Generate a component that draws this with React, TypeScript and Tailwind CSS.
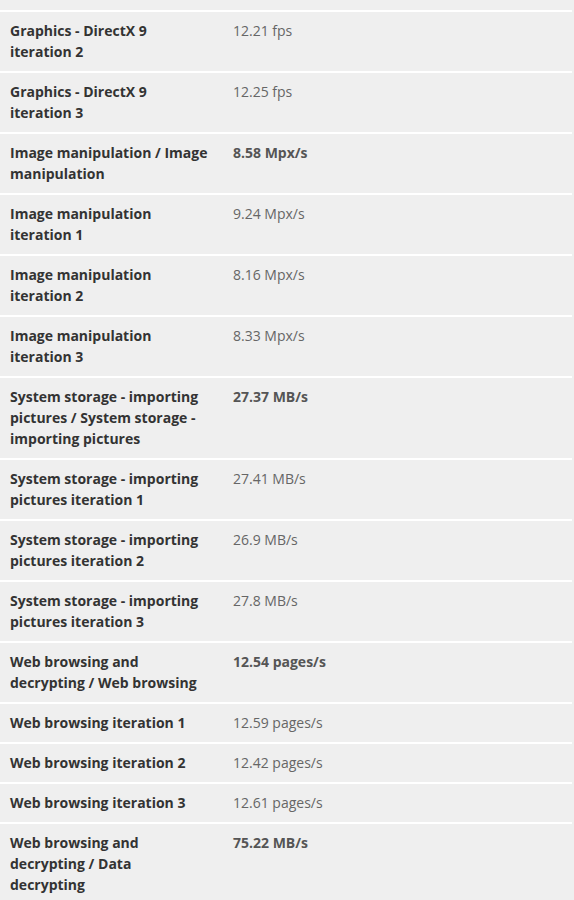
const rows: { label: string; value: string; strong?: boolean }[] = [
  { label: 'Graphics - DirectX 9 iteration 2', value: '12.21 fps' },
  { label: 'Graphics - DirectX 9 iteration 3', value: '12.25 fps' },
  { label: 'Image manipulation / Image manipulation', value: '8.58 Mpx/s', strong: true },
  { label: 'Image manipulation iteration 1', value: '9.24 Mpx/s' },
  { label: 'Image manipulation iteration 2', value: '8.16 Mpx/s' },
  { label: 'Image manipulation iteration 3', value: '8.33 Mpx/s' },
  {
    label: 'System storage - importing pictures / System storage - importing pictures',
    value: '27.37 MB/s',
    strong: true,
  },
  { label: 'System storage - importing pictures iteration 1', value: '27.41 MB/s' },
  { label: 'System storage - importing pictures iteration 2', value: '26.9 MB/s' },
  { label: 'System storage - importing pictures iteration 3', value: '27.8 MB/s' },
  { label: 'Web browsing and decrypting / Web browsing', value: '12.54 pages/s', strong: true },
  { label: 'Web browsing iteration 1', value: '12.59 pages/s' },
  { label: 'Web browsing iteration 2', value: '12.42 pages/s' },
  { label: 'Web browsing iteration 3', value: '12.61 pages/s' },
  { label: 'Web browsing and decrypting / Data decrypting', value: '75.22 MB/s', strong: true },
];

export default function App() {
  return (
    <div className="h-[900px] overflow-hidden bg-[#efefef] font-['Open_Sans',sans-serif] text-[14px] leading-[21px]">
      <div className="w-[572px]">
        <div className="h-[10px]" />
        {rows.map((row, i) => (
          <div key={i} className="flex border-t-2 border-white">
            <div className="w-[233px] shrink-0 pl-[10px] pr-[24px] pt-[8px] pb-[9px] font-bold text-[#333]">
              {row.label}
            </div>
            <div
              className={
                row.strong
                  ? 'pt-[8px] pb-[9px] font-bold text-[#555]'
                  : 'pt-[8px] pb-[9px] text-[#666]'
              }
            >
              {row.value}
            </div>
          </div>
        ))}
      </div>
    </div>
  );
}
